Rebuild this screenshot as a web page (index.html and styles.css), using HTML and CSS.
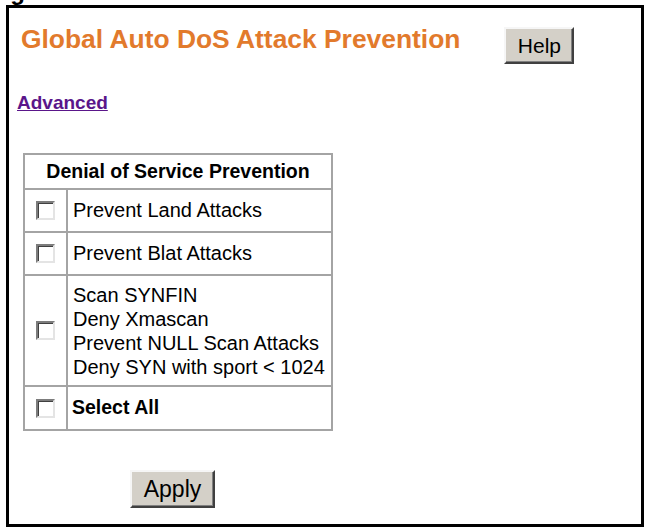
FILE: index.html
```
<!DOCTYPE html>
<html>
<head>
<meta charset="utf-8">
<title>Global Auto DoS Attack Prevention</title>
<link rel="stylesheet" href="styles.css">
</head>
<body>
<div class="caption"><div class="caption-text">Figure</div></div>
<div class="frame">
  <div class="head">
    <h1 class="title">Global Auto DoS Attack Prevention</h1>
    <button class="btn btn-help" type="button">Help</button>
  </div>
  <div class="adv-row"><a class="advanced" href="#">Advanced</a></div>
  <table class="dos">
    <tr><th colspan="2">Denial of Service Prevention</th></tr>
    <tr><td class="c1"><input type="checkbox" class="cb"></td><td class="c2">Prevent Land Attacks</td></tr>
    <tr><td class="c1"><input type="checkbox" class="cb"></td><td class="c2">Prevent Blat Attacks</td></tr>
    <tr class="multi"><td class="c1"><input type="checkbox" class="cb"></td><td class="c2">Scan SYNFIN<br>Deny Xmascan<br>Prevent NULL Scan Attacks<br>Deny SYN with sport &lt; 1024</td></tr>
    <tr class="last"><td class="c1"><input type="checkbox" class="cb"></td><td class="c2 bold">Select All</td></tr>
  </table>
  <button class="btn btn-apply" type="button">Apply</button>
</div>
</body>
</html>
```
FILE: styles.css
```
* { box-sizing: border-box; }

body {
  margin: 0;
  background: #fff;
  font-family: "Liberation Sans", Arial, sans-serif;
  color: #000;
}

.caption {
  height: 5px;
  overflow: hidden;
}

.caption-text {
  font: bold 24px/24px "Liberation Sans", Arial, sans-serif;
  margin-top: -20px;
  margin-left: -11px;
  color: #000;
}

.frame {
  margin-left: 6px;
  width: 638px;
  height: 522px;
  border: 3px solid #000;
}

.head {
  display: flex;
  align-items: flex-start;
  padding-left: 12px;
  gap: 44px;
}

.title {
  margin: 16px 0 0;
  font: bold 26.4px/30px "Liberation Sans", Arial, sans-serif;
  color: #e27a2c;
  white-space: nowrap;
}

.btn {
  background: #d4d0c8;
  border: 2px solid;
  border-color: #f6f6f6 #404040 #404040 #f6f6f6;
  box-shadow: inset -1px -1px 0 #808080;
  font-family: "Liberation Sans", Arial, sans-serif;
  color: #000;
  padding: 0;
}

.btn-help {
  margin-top: 19px;
  width: 70px;
  height: 37px;
  font-size: 21px;
}

.adv-row {
  margin: 28px 0 0 8px;
  font: bold 19px/22px "Liberation Sans", Arial, sans-serif;
}

.advanced {
  color: #5a168a;
  text-decoration: underline;
}

.dos {
  margin: 39px 0 0 14px;
  border-collapse: separate;
  border-spacing: 0;
  border: 2px solid #a4a4a4;
  width: 310px;
}

.dos th {
  font: bold 19.5px/23px "Liberation Sans", Arial, sans-serif;
  padding: 5px 0;
  border-bottom: 2px solid #a4a4a4;
  text-align: center;
}

.dos td {
  border-bottom: 2px solid #a4a4a4;
  font: 20px/23px "Liberation Sans", Arial, sans-serif;
  vertical-align: middle;
}

.dos td.c1 {
  width: 43px;
  padding: 0;
  border-right: 2px solid #a4a4a4;
}

.dos td.c2 {
  padding: 9px 4px 9px 5px;
}

.dos tr.multi td.c2 {
  line-height: 24px;
  padding: 7px 4px 6px 5px;
}

.dos tr.last td {
  border-bottom: none;
}

.dos td.bold {
  font-weight: bold;
  font-size: 19.5px;
  padding-left: 4px;
  padding-bottom: 10px;
}

.cb {
  appearance: none;
  -webkit-appearance: none;
  display: block;
  width: 19px;
  height: 19px;
  margin: 0 auto;
  background: #fff;
  border: 2px solid;
  border-color: #7c7c7c #e4e4e4 #e4e4e4 #7c7c7c;
  box-shadow: inset 1px 1px 0 #404040;
}

.btn-apply {
  display: block;
  margin: 39px 0 0 121px;
  width: 85px;
  height: 38px;
  font-size: 23px;
}
```
